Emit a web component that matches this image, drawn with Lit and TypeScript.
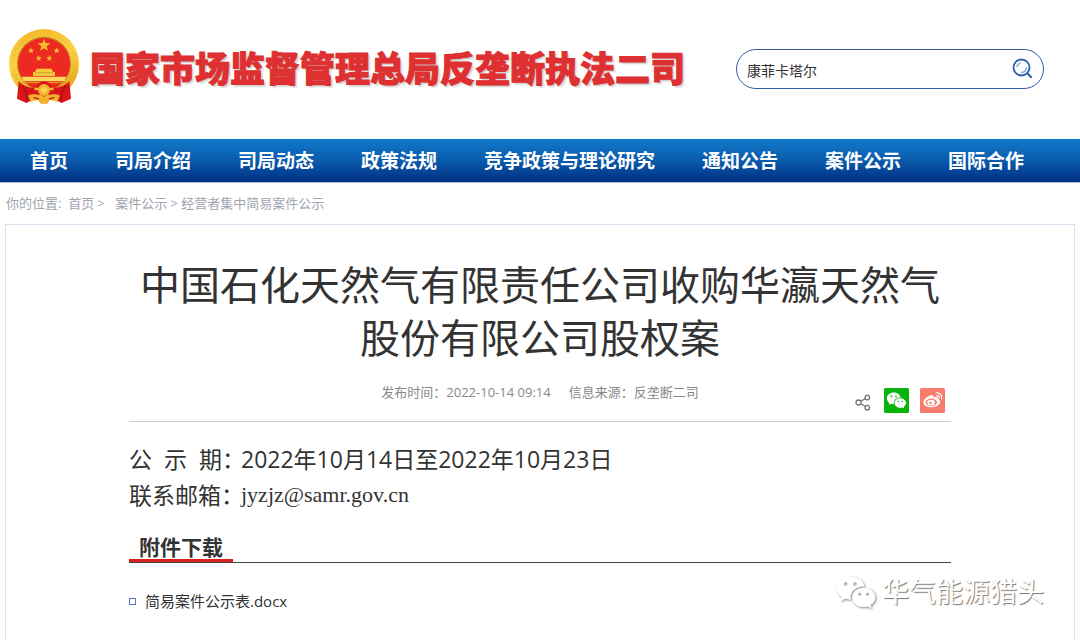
import { LitElement, html, css, svg } from "lit";
import { customElement } from "lit/decorators.js";

const NAV = [
  "首页",
  "司局介绍",
  "司局动态",
  "政策法规",
  "竞争政策与理论研究",
  "通知公告",
  "案件公示",
  "国际合作",
];

/** Points of a five-pointed star centred on (cx, cy). */
const star = (cx: number, cy: number, r: number) => {
  const pts: string[] = [];
  for (let i = 0; i < 10; i++) {
    const a = (Math.PI / 5) * i - Math.PI / 2;
    const d = i % 2 ? r * 0.42 : r;
    pts.push(`${(cx + d * Math.cos(a)).toFixed(1)},${(cy + d * Math.sin(a)).toFixed(1)}`);
  }
  return svg`<polygon points=${pts.join(" ")} fill="#f5bd2d" />`;
};

@customElement("state-emblem")
export class StateEmblem extends LitElement {
  static styles = css`
    :host { display: block; width: 70px; }
    .art { display: block; width: 100%; }
  `;
  render() {
    return html`<svg class="art" viewBox="0 0 210 225" role="img" aria-label="国徽">
      <defs>
        <linearGradient id="gold" x1="0" y1="0" x2="0.3" y2="1">
          <stop offset="0" stop-color="#f0b428" />
          <stop offset="0.5" stop-color="#fbd344" />
          <stop offset="1" stop-color="#e8a81f" />
        </linearGradient>
      </defs>
      <circle cx="105" cy="105" r="105" fill="url(#gold)" />
      <circle cx="105" cy="105" r="92" fill="none" stroke="#dfa02a" stroke-width="9" stroke-dasharray="3 9" opacity="0.35" />
      <circle cx="105" cy="104" r="81" fill="#c9851d" />
      <circle cx="105" cy="105" r="78" fill="#ec2a22" />
      ${star(105, 49, 20)} ${star(66, 65, 10)} ${star(143, 65, 10)} ${star(89, 88, 10)} ${star(121, 88, 10)}
      <path d="M82 119h46l4 10h6v12H72v-12h6z" fill="#f7c93f" />
      <path d="M78 131h54" stroke="#c9851d" stroke-width="2" />
      <path d="M38 143h134l-6 14H44z" fill="#fbd75a" />
      <path d="M40 161h130" stroke="#d98f1f" stroke-width="4" />
      <path d="M29 157c14 14 32 20 48 20 8-13 18-20 28-20s20 7 28 20c16 0 34-6 48-20l5 52-28 13-18-9H70l-18 9-28-13z" fill="#d8151b" />
      <path d="M40 170c8 10 14 20 14 46M170 170c-8 10-14 20-14 46" fill="none" stroke="#a80f14" stroke-width="5" />
      <circle cx="105" cy="183" r="18" fill="#f3b52c" />
      <circle cx="105" cy="183" r="9" fill="#fad25a" />
      <path d="M76 180h15M119 180h15" stroke="#f3b52c" stroke-width="7" />
      <path d="M57 200c14-6 32-6 48 3 16-9 34-9 48-3l-8 18-22-6-8 12H95l-8-12-22 6z" fill="#f0b12b" />
      <path d="M74 206l16 4M136 206l-16 4" stroke="#c5161a" stroke-width="4" />
    </svg>`;
  }
}

@customElement("app-root")
export class AppRoot extends LitElement {
  static styles = css`
    :host {
      display: block;
      font-family: "Open Sans", "Noto Sans CJK SC", sans-serif;
      color: #333;
      background: #fff;
    }
    a { color: inherit; text-decoration: none; }
    .page {
      position: relative;
      display: flex;
      flex-direction: column;
      min-height: 100vh;
    }
    .top {
      display: flex;
      align-items: center;
      box-sizing: border-box;
      height: 139px;
      padding: 0 36px 6px 9px;
    }
    .site {
      margin: 0 0 0 11px;
      padding-top: 4px;
      font-size: 35px;
      line-height: 48px;
      font-weight: 900;
      white-space: nowrap;
      color: #de3031;
      -webkit-text-stroke: 1px #de3031;
      text-shadow: 2px 2px 2px #ccc;
    }
    .search {
      display: flex;
      align-items: center;
      box-sizing: border-box;
      width: 308px;
      height: 40px;
      margin-top: 4px;
      margin-left: auto;
      padding: 0 10px;
      border: 1px solid #2f5ea3;
      border-radius: 20px;
    }
    .query {
      flex: 1;
      min-width: 0;
      padding: 4px 0 0;
      border: 0;
      outline: 0;
      background: none;
      font: inherit;
      font-size: 14px;
      line-height: 20px;
      color: #333;
    }
    .go {
      padding: 0;
      border: 0;
      background: none;
      cursor: pointer;
    }
    .icon { display: block; }
    .nav {
      display: flex;
      gap: 47px;
      padding: 2px 30px 0;
      border-bottom: 1px solid #b7c3dc;
      background: linear-gradient(#1079cb, #0a5bac 50%, #002f83);
      color: #fff;
      font-size: 19px;
      line-height: 41px;
      font-weight: 700;
      white-space: nowrap;
    }
    .crumbs {
      display: flex;
      padding: 10px 6px 11px;
      font-size: 13px;
      line-height: 20px;
      color: #a0a4ae;
      white-space: pre;
    }
    .panel {
      flex: 1;
      margin: 0 5px;
      padding: 0 20px;
      border: 1px solid #d8dfee;
      border-bottom: 0;
    }
    .article {
      max-width: 822px;
      margin: 0 auto;
    }
    .title {
      margin: 0 auto;
      padding-top: 33px;
      font-size: 40px;
      line-height: 53px;
      font-weight: 400;
      text-align: center;
    }
    .meta {
      display: grid;
      grid-template-columns: 1fr auto 1fr;
      align-items: start;
      padding: 18px 5px 7px;
      border-bottom: 1px solid #ccc;
      font-size: 13px;
      line-height: 20px;
      color: #888;
    }
    .facts { display: flex; gap: 18px; grid-column: 2; }
    .share {
      display: flex;
      gap: 10px;
      justify-content: flex-end;
      padding-top: 6px;
    }
    .share .go { width: 26px; height: 26px; }
    .info {
      margin: 19px 0 0;
      font-size: 23px;
      line-height: 36px;
    }
    .row { display: flex; }
    .label { width: 112px; white-space: pre; }
    .value { margin: 0; }
    .mail { font-family: "Liberation Serif", serif; font-size: 22px; }
    .files {
      display: flex;
      margin: 22px 0 0;
      border-bottom: 1px solid #444;
      font-size: 21px;
      line-height: 24px;
      font-weight: 700;
    }
    .tab {
      padding: 0 10px;
      border-bottom: 3px solid #dc1f1f;
    }
    .list {
      margin: 26px 0 0;
      padding: 0;
      list-style: none;
      font-size: 15px;
      line-height: 24px;
    }
    .file { display: flex; align-items: center; gap: 9px; }
    .box {
      box-sizing: border-box;
      width: 7px;
      height: 7px;
      border: 1px solid #5c74b4;
    }
    .mark {
      position: absolute;
      right: 36px;
      bottom: 28px;
      display: flex;
      align-items: center;
      gap: 5px;
      font-size: 27px;
      line-height: 40px;
      font-weight: 400;
      color: #fff;
      text-shadow: 1px 1px 1px #777;
    }
    .bubbles { filter: drop-shadow(1px 1px 1px #888); }
  `;

  private wechat = svg`
    <path fill-rule="evenodd" d="M10 4C5 4 1 7.300 1 11.500c0 2.400 1.300 4.500 3.400 5.900L3.600 20l3-1.600c1.300.4 2.400.6 3.700.5-.1-.5-.2-1-.2-1.500 0-3.900 3.700-7 8.300-7h.7C18.200 6.700 14.500 4 10 4zM7 7.800a1.200 1.200 0 1 1 0 2.400 1.200 1.200 0 0 1 0-2.400zm6 0a1.200 1.200 0 1 1 0 2.400 1.200 1.200 0 0 1 0-2.400z" />
    <path fill-rule="evenodd" d="M18.500 11.300c-4.200 0-7.500 2.800-7.500 6.200s3.300 6.200 7.500 6.200c.9 0 1.800-.1 2.600-.4l2.500 1.300-.7-2.200c1.900-1.200 3.100-2.900 3.100-4.900 0-3.400-3.300-6.200-7.500-6.200zM16 14.500a1 1 0 1 1 0 2 1 1 0 0 1 0-2zm5 0a1 1 0 1 1 0 2 1 1 0 0 1 0-2z" />`;

  render() {
    return html`
      <div class="page">
        <header class="top">
          <state-emblem></state-emblem>
          <h1 class="site">国家市场监督管理总局反垄断执法二司</h1>
          <form class="search" role="search" @submit=${(e: Event) => e.preventDefault()}>
            <input class="query" type="text" aria-label="搜索" value="康菲卡塔尔" />
            <button class="go" type="submit" aria-label="搜索">
              <svg class="icon" width="21" height="21" viewBox="0 0 21 21" fill="none" stroke="#2c62a8" stroke-linecap="round">
                <circle cx="9.500" cy="9.500" r="8" stroke-width="1.800" />
                <path d="M15.500 15.500l3.500 3.500" stroke-width="2.200" />
                <path d="M5 8.500a5 5 0 0 1 3-3.600M14.500 10a5.500 5.500 0 0 1-5 4.500" stroke="#8fb0d8" stroke-width="1.600" />
              </svg>
            </button>
          </form>
        </header>
        <nav class="nav">${NAV.map((n) => html`<a href="#">${n}</a>`)}</nav>
        <div class="crumbs"><span>你的位置:  </span><a href="#">首页</a><span> &gt;   </span><a href="#">案件公示</a><span> &gt; </span><a href="#">经营者集中简易案件公示</a></div>
        <main class="panel">
          <article class="article">
            <h2 class="title">中国石化天然气有限责任公司收购华瀛天然气股份有限公司股权案</h2>
            <div class="meta">
              <div class="facts">
                <span>发布时间：2022-10-14 09:14</span>
                <span>信息来源：反垄断二司</span>
              </div>
              <div class="share">
                <button class="go" type="button" aria-label="分享">
                  <svg class="icon" width="26" height="26" viewBox="0 0 26 26" fill="none" stroke="#777" stroke-width="1.300">
                    <circle cx="10.500" cy="14.500" r="2.500" />
                    <circle cx="19.300" cy="9.500" r="2.300" />
                    <circle cx="19.300" cy="19.700" r="2.300" />
                    <path d="M12.700 13.200l4.600-2.600M12.700 15.800l4.600 2.700" />
                  </svg>
                </button>
                <button class="go" type="button" aria-label="微信">
                  <svg class="icon" width="26" height="26" viewBox="0 0 26 26">
                    <rect width="25" height="25" rx="1.500" fill="#07b40b" />
                    <g fill="#fff" transform="translate(2 1.500) scale(.77)">${this.wechat}</g>
                  </svg>
                </button>
                <button class="go" type="button" aria-label="微博">
                  <svg class="icon" width="26" height="26" viewBox="0 0 26 26">
                    <rect width="25" height="25" rx="1.500" fill="#f77c6e" />
                    <path fill="#fff" d="M10.800 7.300c1.800-.7 3 .2 2.500 2 2.600-1 5-.6 4.400 1.700 2 .6 3 1.900 2.500 3.600-.7 2.600-4.400 4.700-8.800 4.700-4.500 0-8-2-8-4.900 0-2.700 3.600-6 7.400-7.100z" />
                    <ellipse cx="11.300" cy="14.300" rx="5.700" ry="3.700" fill="#f77c6e" />
                    <ellipse cx="11.100" cy="14.600" rx="3.900" ry="2.900" fill="#fff" />
                    <circle cx="10.500" cy="15" r="1.300" fill="#f77c6e" />
                    <path d="M16.800 7.700c1.600-.2 2.700.9 2.300 2.500M16.300 5c3.700-.5 6.200 2.200 5.300 5.800" fill="none" stroke="#fff" stroke-width="1.200" stroke-linecap="round" />
                  </svg>
                </button>
              </div>
            </div>
            <dl class="info">
              <div class="row">
                <dt class="label">公&nbsp;&nbsp;示&nbsp;&nbsp;期：</dt>
                <dd class="value">2022年10月14日至2022年10月23日</dd>
              </div>
              <div class="row">
                <dt class="label">联系邮箱：</dt>
                <dd class="value mail">jyzjz@samr.gov.cn</dd>
              </div>
            </dl>
            <h3 class="files"><span class="tab">附件下载</span></h3>
            <ul class="list">
              <li class="file"><span class="box"></span><a href="#">简易案件公示表.docx</a></li>
            </ul>
          </article>
        </main>
        <div class="mark">
          <svg class="icon bubbles" width="42" height="38" viewBox="0 3 27 22" fill="#fff">${this.wechat}</svg>
          <span>华气能源猎头</span>
        </div>
      </div>
    `;
  }
}
